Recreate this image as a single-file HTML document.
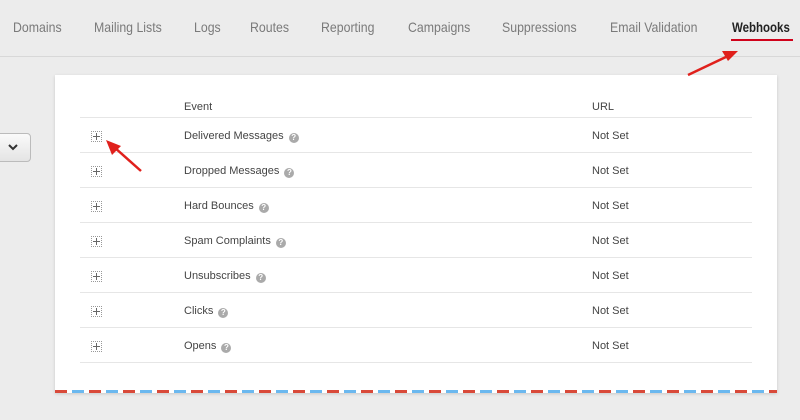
<!DOCTYPE html>
<html><head><style>
body{margin:0;width:800px;height:420px;background:#ececec;font-family:"Liberation Sans",sans-serif;position:relative;overflow:hidden}
.nav{position:absolute;top:0;left:0;width:800px;height:56px;border-bottom:1px solid #d8d8d8}
.nav span{position:absolute;top:19px;font-size:14px;color:#7a7a7a;transform:scaleX(0.88);transform-origin:left;white-space:nowrap}
.ul{position:absolute;left:731px;top:39px;width:62px;height:2px;background:#d0021b}
.btn{position:absolute;left:-4px;top:133px;width:33px;height:27px;border:1px solid #bbb;border-radius:4px;background:linear-gradient(#fafafa,#e4e4e4)}
.card{position:absolute;left:55px;top:75px;width:722px;height:318px;background:#fff;box-shadow:0 1px 3px rgba(0,0,0,.15);overflow:hidden}
.stripe{position:absolute;left:0;bottom:0;width:100%;height:3px;background:repeating-linear-gradient(90deg,#d94a3a 0 12px,#fff 12px 17px,#6bb8ef 17px 29px,#fff 29px 34px)}
.row{position:absolute;left:25px;width:672px;height:35px;box-sizing:border-box;border-bottom:1px solid #e6e6e6;font-size:11px;color:#444}
.row .e{position:absolute;left:104px;top:12px;white-space:nowrap}
.row .u{position:absolute;left:512px;top:12px}
.pl{position:absolute;left:11px;top:13px;width:9px;height:9px;border:1px dotted #999}
.pl:before{content:"";position:absolute;left:4px;top:1px;width:1px;height:7px;background:#666}
.pl:after{content:"";position:absolute;left:1px;top:4px;width:7px;height:1px;background:#666}
.q{display:inline-block;width:10px;height:10px;border-radius:50%;background:#aaa;color:#fff;font-size:8px;line-height:10px;text-align:center;margin-left:5px;font-weight:bold;vertical-align:-1px}
</style></head><body>
<div class="nav">
<span style="left:13px">Domains</span><span style="left:94px">Mailing Lists</span><span style="left:194px">Logs</span><span style="left:250px">Routes</span><span style="left:321px">Reporting</span><span style="left:408px">Campaigns</span><span style="left:502px">Suppressions</span><span style="left:610px">Email Validation</span><span style="left:732px;color:#222;font-weight:bold;transform:scaleX(0.82)">Webhooks</span>
<div class="ul"></div></div>
<div class="btn"><svg width="33" height="27"><path d="M12 11l4 4 4-4" stroke="#333" stroke-width="2" fill="none"/></svg></div>
<div class="card">
<div class="row" style="top:8px"><span class="e" style="top:18px">Event</span><span class="u" style="top:18px">URL</span></div>
<div class="row" style="top:43px"><div class="pl"></div><span class="e">Delivered Messages<span class="q">?</span></span><span class="u">Not Set</span></div>
<div class="row" style="top:78px"><div class="pl"></div><span class="e">Dropped Messages<span class="q">?</span></span><span class="u">Not Set</span></div>
<div class="row" style="top:113px"><div class="pl"></div><span class="e">Hard Bounces<span class="q">?</span></span><span class="u">Not Set</span></div>
<div class="row" style="top:148px"><div class="pl"></div><span class="e">Spam Complaints<span class="q">?</span></span><span class="u">Not Set</span></div>
<div class="row" style="top:183px"><div class="pl"></div><span class="e">Unsubscribes<span class="q">?</span></span><span class="u">Not Set</span></div>
<div class="row" style="top:218px"><div class="pl"></div><span class="e">Clicks<span class="q">?</span></span><span class="u">Not Set</span></div>
<div class="row" style="top:253px"><div class="pl"></div><span class="e">Opens<span class="q">?</span></span><span class="u">Not Set</span></div>
<div class="stripe"></div>
</div>
<svg style="position:absolute;left:0;top:0" width="800" height="420">
<line x1="688" y1="75" x2="728" y2="56" stroke="#e0201c" stroke-width="2.5"/>
<polygon points="738,51 722,51 728,61" fill="#e0201c"/>
<line x1="141" y1="171" x2="114" y2="147" stroke="#e0201c" stroke-width="2.5"/>
<polygon points="106,140 112,155 121,146" fill="#e0201c"/>
</svg>
</body></html>
